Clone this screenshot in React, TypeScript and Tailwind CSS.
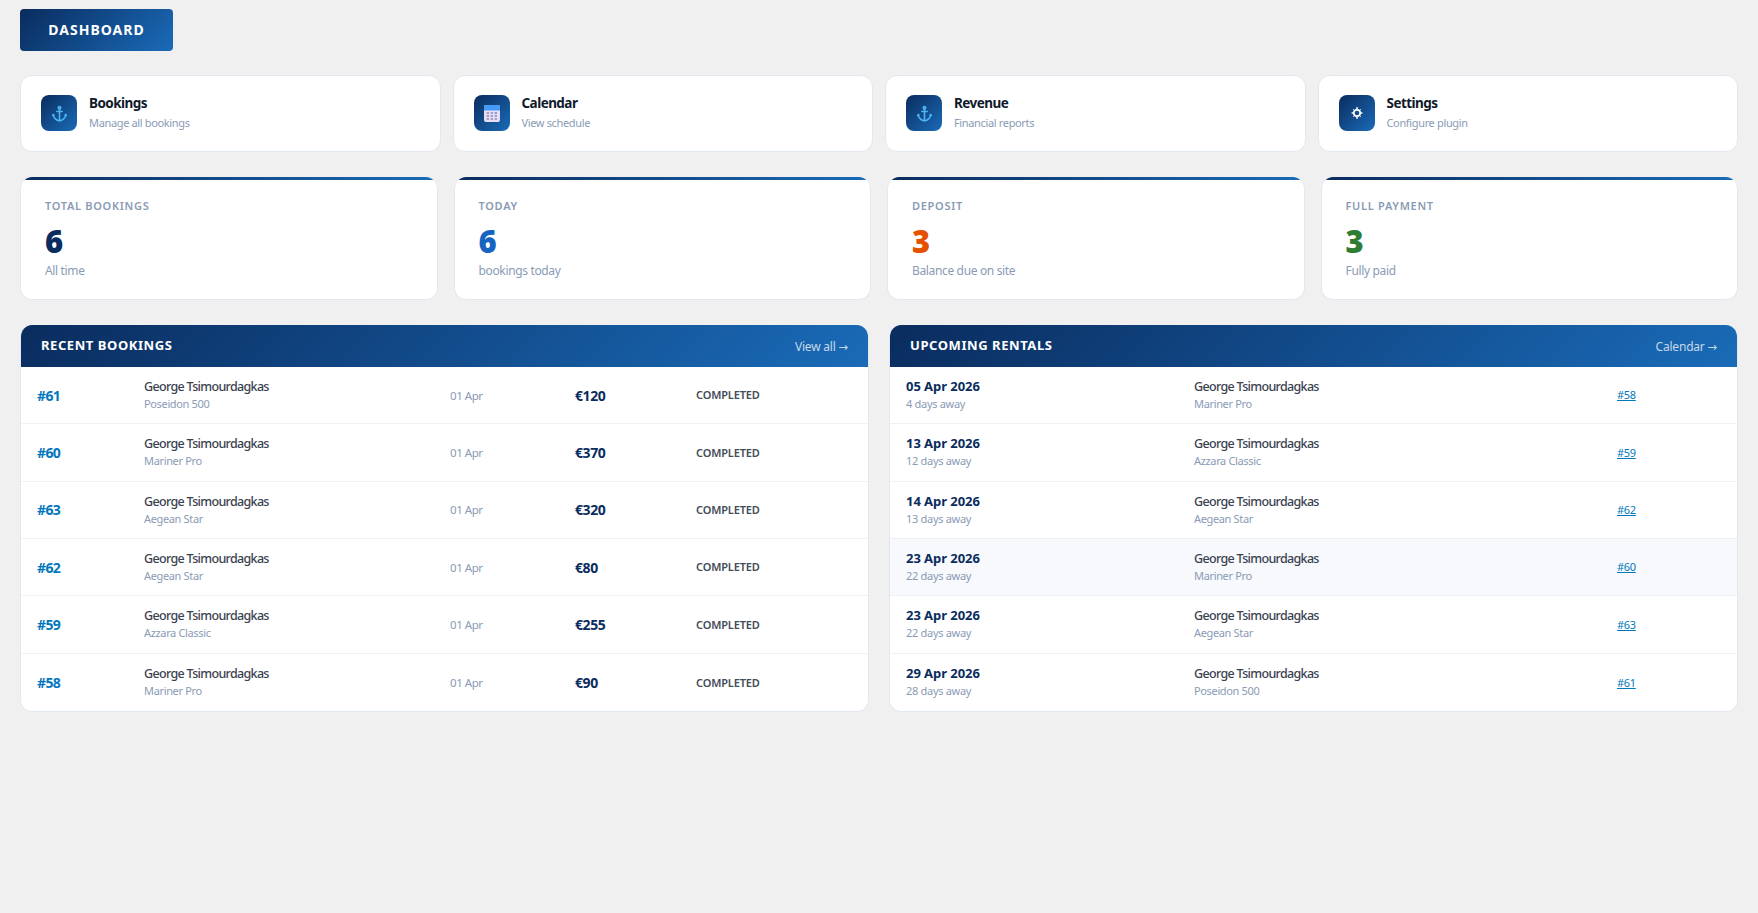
const FONT = '[font-family:"Noto_Sans",sans-serif]';

function Anchor() {
  return (
    <svg viewBox="0 0 16 17" className="w-[15px] h-[17px]" fill="none" stroke="#4db6f5" strokeWidth="1.7" strokeLinecap="round">
      <circle cx="8" cy="2.4" r="1.3" />
      <path d="M8 3.8v12.4" />
      <path d="M5.2 6.4h5.6" />
      <path d="M1.2 9.6C1.4 13.4 5 15.8 8 16.2c3-.4 6.6-2.8 6.8-6.6" />
      <path d="M.6 11l.7-1.8 1.6 1.2M15.4 11l-.7-1.8-1.6 1.2" strokeWidth="1" />
    </svg>
  );
}

function CalendarIcon() {
  return (
    <svg viewBox="0 0 16 17" className="w-4 h-[17px]">
      <rect x="0" y="0" width="16" height="17" rx="2" fill="#e6dff5" />
      <path d="M0 5.5V2a2 2 0 0 1 2-2h12a2 2 0 0 1 2 2v3.5z" fill="#459af5" />
      {[2.6, 6.6, 10.6].map((x, i) =>
        [7, 10, 13].map((y, j) => (
          <rect key={`${i}${j}`} x={x} y={y} width="2.4" height="2" fill={i === 2 && j === 0 ? "#7c9fe0" : "#a79fc4"} />
        ))
      )}
    </svg>
  );
}

function Gear() {
  return (
    <svg viewBox="0 0 12 12" className="w-3 h-3" fill="none" stroke="#ffffff">
      <circle cx="6" cy="6" r="3.2" strokeWidth="1.7" />
      <path d="M6 .3v2M6 9.7v2M.6 6h1.6M9.8 6h1.6" strokeWidth="1.6" />
      <path d="M2.2 2.2l1 1M8.8 8.8l1 1M2.2 9.8l1-1M8.8 3.2l1-1" strokeWidth="0.9" />
    </svg>
  );
}

const navs = [
  { t: "Bookings", s: "Manage all bookings", i: <Anchor /> },
  { t: "Calendar", s: "View schedule", i: <CalendarIcon /> },
  { t: "Revenue", s: "Financial reports", i: <Anchor /> },
  { t: "Settings", s: "Configure plugin", i: <Gear /> },
];

const stats = [
  { l: "TOTAL BOOKINGS", v: "6", s: "All time", c: "text-[#0a2c5e]" },
  { l: "TODAY", v: "6", s: "bookings today", c: "text-[#1565c0]" },
  { l: "DEPOSIT", v: "3", s: "Balance due on site", c: "text-[#e65100]" },
  { l: "FULL PAYMENT", v: "3", s: "Fully paid", c: "text-[#2e7d32]" },
];

const recent = [
  ["#61", "Poseidon 500", "€120"],
  ["#60", "Mariner Pro", "€370"],
  ["#63", "Aegean Star", "€320"],
  ["#62", "Aegean Star", "€80"],
  ["#59", "Azzara Classic", "€255"],
  ["#58", "Mariner Pro", "€90"],
];

const upcoming = [
  ["05 Apr 2026", "4 days away", "Mariner Pro", "#58"],
  ["13 Apr 2026", "12 days away", "Azzara Classic", "#59"],
  ["14 Apr 2026", "13 days away", "Aegean Star", "#62"],
  ["23 Apr 2026", "22 days away", "Mariner Pro", "#60"],
  ["23 Apr 2026", "22 days away", "Aegean Star", "#63"],
  ["29 Apr 2026", "28 days away", "Poseidon 500", "#61"],
];

function Customer({ sub }: { sub: string }) {
  return (
    <div className="flex flex-col">
      <span className="text-[12.5px] leading-[17px] font-medium text-[#3a4250] tracking-[-0.67px] whitespace-nowrap">George Tsimourdagkas</span>
      <span className="mt-px text-[11px] leading-[16px] text-[#8a9bb5] tracking-[-0.35px] whitespace-nowrap">{sub}</span>
    </div>
  );
}

function PanelHead({ title, link }: { title: string; link: string }) {
  return (
    <div className="h-[42px] flex items-center justify-between pl-5 pr-5 bg-[linear-gradient(135deg,#0a2c5e,#1a6bb8)]">
      <span className="text-[13px] font-bold text-white tracking-[0.57px] whitespace-nowrap">{title}</span>
      <span className="pt-[2px] text-[12px] text-white/75 tracking-[-0.2px] whitespace-nowrap">
        {link} <span className='text-[11.5px] [font-family:"DejaVu_Sans",sans-serif]'>→</span>
      </span>
    </div>
  );
}

export default function App() {
  return (
    <div className={`min-h-screen bg-[#f0f0f1] px-5 pt-[9px] ${FONT}`}>
      <div className="inline-flex h-[42px] w-[153px] items-center justify-center rounded bg-[linear-gradient(135deg,#0a2c5e,#1a6bb8)] pb-[2px] text-[14px] font-bold tracking-[1px] text-white">
        DASHBOARD
      </div>

      <div className="mt-6 grid grid-cols-4 gap-3">
        {navs.map((n) => (
          <div key={n.t} className="flex h-[77px] items-start gap-3 rounded-xl border border-[#e2e8f0] bg-white pl-5 pt-[19px]">
            <div className="flex h-9 w-9 shrink-0 items-center justify-center rounded-lg bg-[linear-gradient(135deg,#0a2c5e,#1a6bb8)]">
              {n.i}
            </div>
            <div className="-mt-[2px] flex flex-col">
              <span className="text-[13.5px] leading-[20px] font-bold text-[#0f1a2b] tracking-[-0.55px]">{n.t}</span>
              <span className="mt-px text-[11px] leading-[18px] text-[#8a9bb5] tracking-[-0.35px]">{n.s}</span>
            </div>
          </div>
        ))}
      </div>

      <div className="mt-[25px] grid grid-cols-4 gap-4">
        {stats.map((s) => (
          <div key={s.l} className="relative h-[123px] overflow-hidden rounded-xl border border-t-0 border-[#e2e8f0] bg-white pl-6 pt-[21px]">
            <div className="absolute inset-x-0 top-0 h-[3px] bg-[linear-gradient(90deg,#0a2c5e,#1a6bb8)]" />
            <div className="text-[11px] leading-[16px] font-semibold tracking-[0.7px] text-[#8a9bb5]">{s.l}</div>
            <div className={`mt-[8px] text-[31px] leading-[38px] font-black ${s.c}`}>{s.v}</div>
            <div className="mt-[2px] text-[12px] leading-[18px] text-[#8a9bb5] tracking-[-0.35px]">{s.s}</div>
          </div>
        ))}
      </div>

      <div className="mt-[25px] grid grid-cols-2 gap-5">
        <div className="overflow-hidden rounded-xl border border-[#e2e8f0] border-t-0 bg-white">
          <PanelHead title="RECENT BOOKINGS" link="View all" />
          {recent.map((r, i) => (
            <div key={r[0]} className={`flex h-[57.33px] items-center ${i < 5 ? "border-b border-[#eef1f6]" : ""}`}>
              <div className="w-[107px] pl-4 text-[14px] font-bold tracking-[-0.6px] text-[#0277bd]">{r[0]}</div>
              <div className="w-[306px] pl-4"><Customer sub={r[1]} /></div>
              <div className="w-[126px] pl-4 text-[11.5px] text-[#8a9bb5] tracking-[-0.45px]">01 Apr</div>
              <div className="w-[120px] pl-[15px] text-[14px] font-bold tracking-[-0.4px] text-[#0a2c5e]">{r[2]}</div>
              <div className="pl-4 pt-px text-[11px] font-semibold tracking-[-0.15px] text-[#444c58]">COMPLETED</div>
            </div>
          ))}
        </div>

        <div className="overflow-hidden rounded-xl border border-[#e2e8f0] border-t-0 bg-white">
          <PanelHead title="UPCOMING RENTALS" link="Calendar" />
          {upcoming.map((r, i) => (
            <div key={r[3]} className={`flex h-[57.33px] items-center ${i < 5 ? "border-b border-[#eef1f6]" : ""} ${i === 3 ? "bg-[#f7f9fc]" : ""}`}>
              <div className="w-[288px] pl-4">
                <div className="text-[13px] leading-[17px] font-bold tracking-[-0.05px] text-[#0a2c5e]">{r[0]}</div>
                <div className="text-[11px] leading-[17px] text-[#8a9bb5] tracking-[-0.3px]">{r[1]}</div>
              </div>
              <div className="w-[423px] pl-4"><Customer sub={r[2]} /></div>
              <div className="pl-4 pt-px text-[11px] tracking-[-0.3px] text-[#0277bd] underline">{r[3]}</div>
            </div>
          ))}
        </div>
      </div>
    </div>
  );
}
